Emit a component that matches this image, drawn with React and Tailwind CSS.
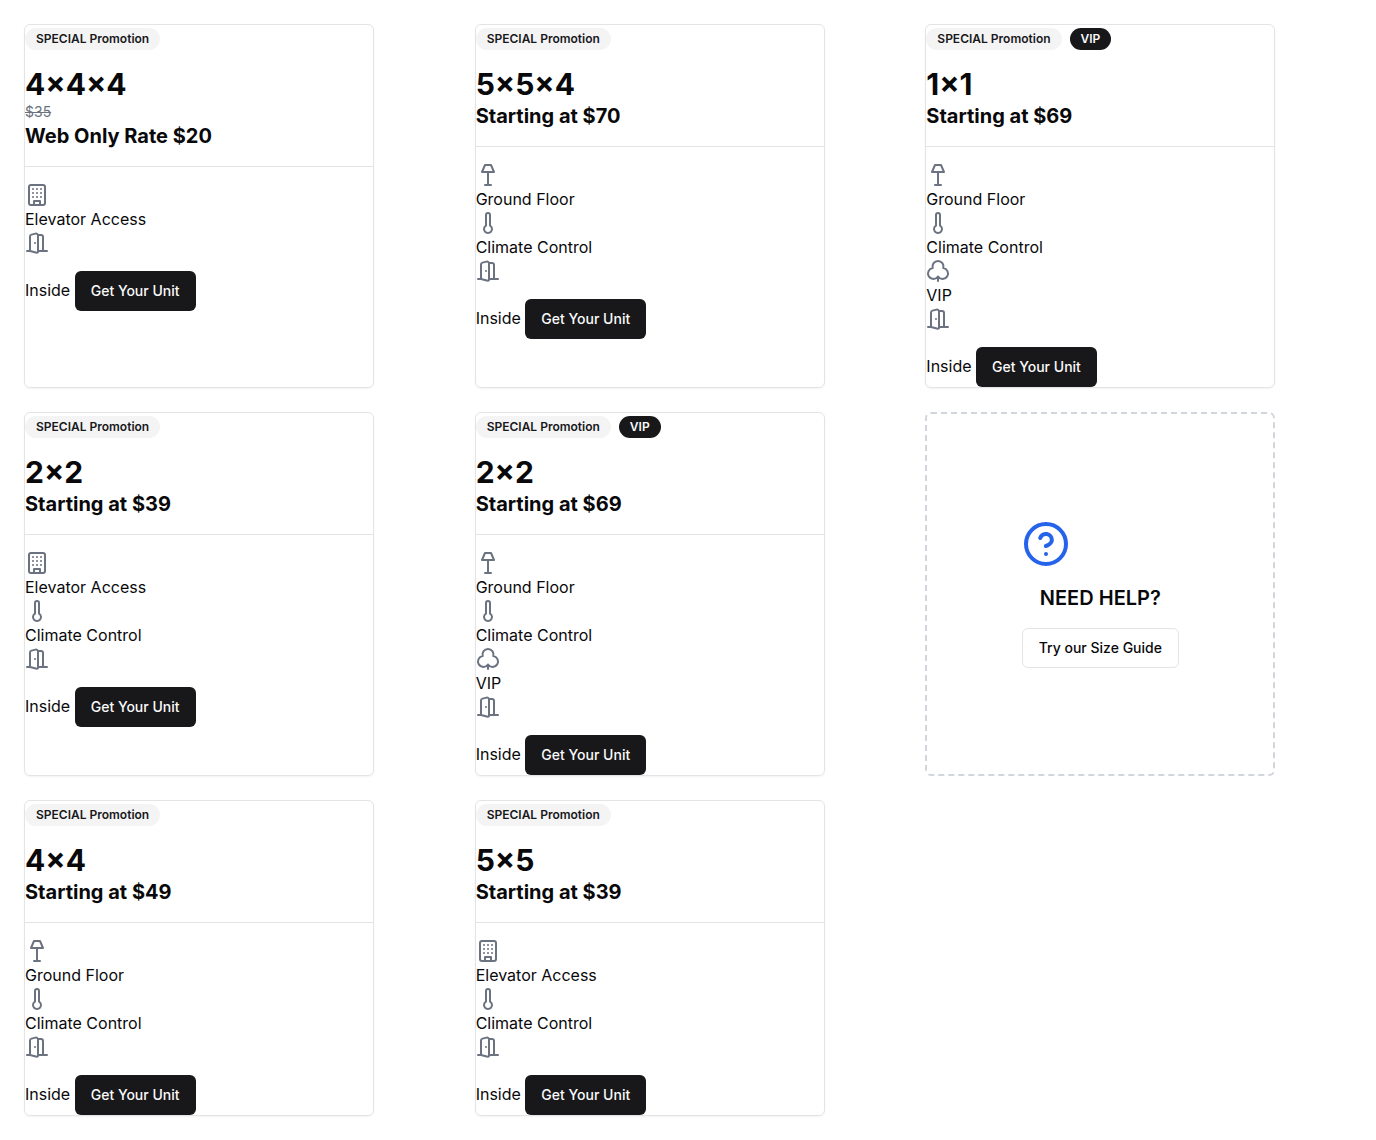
import React from "react";

function Svg({ children }) {
  return (
    <svg viewBox="0 0 24 24" className="block size-6 text-[#6b7280]" fill="none" stroke="currentColor" strokeWidth="2" strokeLinecap="round" strokeLinejoin="round" aria-hidden="true">
      {children}
    </svg>
  );
}

const Elevator = () => (
  <Svg>
    <rect width="16" height="20" x="4" y="2" rx="2" />
    <path d="M9 22v-4h6v4" />
    <path d="M8 6h.01M16 6h.01M12 6h.01M12 10h.01M12 14h.01M16 10h.01M16 14h.01M8 10h.01M8 14h.01" />
  </Svg>
);
const Thermometer = () => (
  <Svg>
    <path d="M14 4v10.54a4 4 0 1 1-4 0V4a2 2 0 0 1 4 0Z" />
  </Svg>
);
const Lamp = () => (
  <Svg>
    <path d="M9 2h6l3 7H6l3-7Z" />
    <path d="M12 9v13" />
    <path d="M9 22h6" />
  </Svg>
);
const Tree = () => (
  <Svg>
    <path d="M17.28 9.05a5.5 5.5 0 1 0-10.56 0A5.5 5.5 0 1 0 12 17.66a5.5 5.5 0 1 0 5.28-8.6Z" />
    <path d="M12 17.66V22" />
  </Svg>
);
const Door = () => (
  <Svg>
    <path d="M13 4h3a2 2 0 0 1 2 2v14" />
    <path d="M2 20h3" />
    <path d="M13 20h9" />
    <path d="M10 12v.01" />
    <path d="M13 4.562v16.157a1 1 0 0 1-1.242.97L5 20V5.562a2 2 0 0 1 1.515-1.94l4-1A2 2 0 0 1 13 4.561Z" />
  </Svg>
);

const FEATURES = {
  elevator: [Elevator, "Elevator Access"],
  ground: [Lamp, "Ground Floor"],
  climate: [Thermometer, "Climate Control"],
  vip: [Tree, "VIP"],
};

const UNITS = [
  { size: "4×4×4", was: "$35", price: "Web Only Rate $20", features: ["elevator"] },
  { size: "5×5×4", price: "Starting at $70", features: ["ground", "climate"] },
  { size: "1×1", price: "Starting at $69", vip: true, features: ["ground", "climate", "vip"] },
  { size: "2×2", price: "Starting at $39", features: ["elevator", "climate"] },
  { size: "2×2", price: "Starting at $69", vip: true, features: ["ground", "climate", "vip"] },
  { help: true },
  { size: "4×4", price: "Starting at $49", features: ["ground", "climate"] },
  { size: "5×5", price: "Starting at $39", features: ["elevator", "climate"] },
];

function UnitCard({ unit }) {
  return (
    <article className="w-full max-w-[350px] rounded-md border border-zinc-200 shadow-xs">
      <header className="border-b border-zinc-200 pt-[3px] pb-4">
        <div className="mb-4 flex gap-2">
          <span className="rounded-full border border-transparent bg-zinc-100 px-2.5 py-0.5 text-xs font-semibold text-zinc-900">SPECIAL Promotion</span>
          {unit.vip && (
            <span className="rounded-full border border-transparent bg-zinc-900 px-2.5 py-0.5 text-xs font-semibold text-zinc-50">VIP</span>
          )}
        </div>
        <h2 className="text-3xl font-bold">{unit.size}</h2>
        {unit.was && <p className="text-sm text-[#6b7280] line-through">{unit.was}</p>}
        <p className="text-xl font-bold">{unit.price}</p>
      </header>
      <div className="pt-4">
        {unit.features.map((key) => {
          const [Icon, label] = FEATURES[key];
          return (
            <div key={key}>
              <Icon />
              <p>{label}</p>
            </div>
          );
        })}
        <Door />
        <div>
          Inside{" "}
          <button type="button" className="mt-4 inline-flex h-10 items-center justify-center rounded-md bg-zinc-900 px-4 text-sm font-medium text-zinc-50">
            Get Your Unit
          </button>
        </div>
      </div>
    </article>
  );
}

function HelpCard() {
  return (
    <section className="flex w-full max-w-[350px] items-center justify-center rounded-md border-2 border-dashed border-gray-300">
      <div>
        <svg viewBox="0 0 24 24" className="mb-4 block size-12 text-[#2563eb]" fill="none" stroke="currentColor" strokeWidth="2" strokeLinecap="round" strokeLinejoin="round" aria-hidden="true">
          <circle cx="12" cy="12" r="10" />
          <path d="M9.09 9a3 3 0 0 1 5.83 1c0 2-3 3-3 3" />
          <path d="M12 17h.01" />
        </svg>
        <h2 className="mb-4 text-center text-xl font-semibold">NEED HELP?</h2>
        <button type="button" className="flex h-10 items-center justify-center rounded-md border border-zinc-200 bg-white px-4 text-sm font-medium">
          Try our Size Guide
        </button>
      </div>
    </section>
  );
}

export default function App() {
  return (
    <main className="grid grid-cols-3 gap-6 bg-white p-6 font-['Inter',sans-serif] text-zinc-950">
      {UNITS.map((unit, i) => (unit.help ? <HelpCard key={i} /> : <UnitCard key={i} unit={unit} />))}
    </main>
  );
}
